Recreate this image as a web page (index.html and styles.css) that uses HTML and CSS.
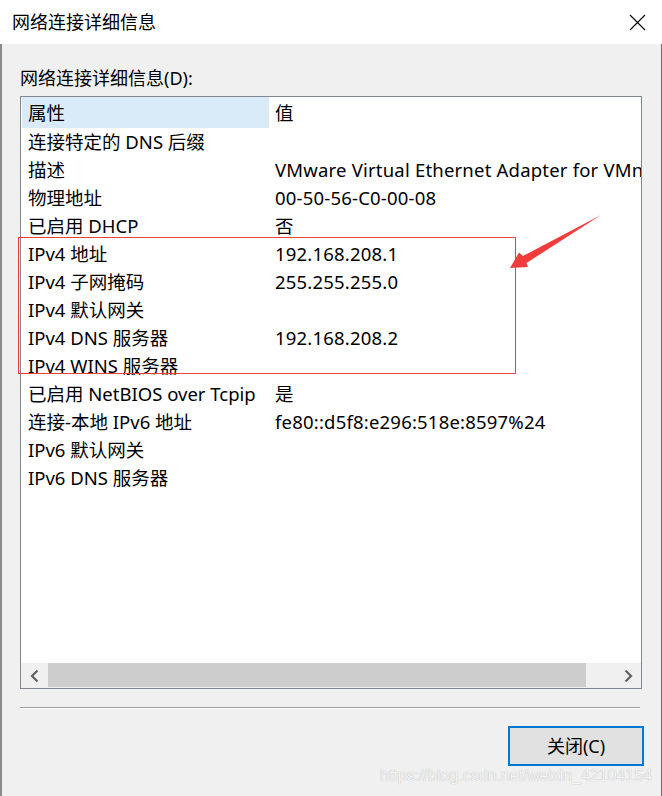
FILE: index.html
```html
<!DOCTYPE html>
<html lang="zh-CN">
<head>
<meta charset="utf-8">
<title>网络连接详细信息</title>
<link rel="stylesheet" href="styles.css">
</head>
<body>
<div class="window">
  <div class="titlebar">
    <span class="title">网络连接详细信息</span>
    <span class="close" aria-label="关闭">
      <svg width="17" height="17" viewBox="0 0 17 17"><path d="M1 1 L16 16 M16 1 L1 16" stroke="#000" stroke-width="1.1" fill="none"/></svg>
    </span>
  </div>
  <div class="content">
    <div class="label">网络连接详细信息(D):</div>
    <div class="listbox">
      <div class="list">
        <div class="row header"><div class="c1">属性</div><div class="c2">值</div></div>
        <div class="row"><div class="c1">连接特定的 DNS 后缀</div><div class="c2"></div></div>
        <div class="row"><div class="c1">描述</div><div class="c2">VMware Virtual Ethernet Adapter for VMnet8</div></div>
        <div class="row"><div class="c1">物理地址</div><div class="c2">00-50-56-C0-00-08</div></div>
        <div class="row"><div class="c1">已启用 DHCP</div><div class="c2">否</div></div>
        <div class="row"><div class="c1">IPv4 地址</div><div class="c2">192.168.208.1</div></div>
        <div class="row"><div class="c1">IPv4 子网掩码</div><div class="c2">255.255.255.0</div></div>
        <div class="row"><div class="c1">IPv4 默认网关</div><div class="c2"></div></div>
        <div class="row"><div class="c1">IPv4 DNS 服务器</div><div class="c2">192.168.208.2</div></div>
        <div class="row"><div class="c1">IPv4 WINS 服务器</div><div class="c2"></div></div>
        <div class="row"><div class="c1">已启用 NetBIOS over Tcpip</div><div class="c2">是</div></div>
        <div class="row"><div class="c1">连接-本地 IPv6 地址</div><div class="c2">fe80::d5f8:e296:518e:8597%24</div></div>
        <div class="row"><div class="c1">IPv6 默认网关</div><div class="c2"></div></div>
        <div class="row"><div class="c1">IPv6 DNS 服务器</div><div class="c2"></div></div>
      </div>
      <div class="hscroll">
        <div class="sbtn">
          <svg width="12" height="14" viewBox="0 0 12 14"><path d="M8.5 1.5 L3 7 L8.5 12.5" stroke="#606060" stroke-width="2.2" fill="none"/></svg>
        </div>
        <div class="track"><div class="thumb"></div></div>
        <div class="sbtn">
          <svg width="12" height="14" viewBox="0 0 12 14"><path d="M3.5 1.5 L9 7 L3.5 12.5" stroke="#606060" stroke-width="2.2" fill="none"/></svg>
        </div>
      </div>
    </div>
    <div class="sep"></div>
    <div class="footer">
      <button class="btn">关闭(C)</button>
    </div>
  </div>
  <svg class="annot" width="662" height="796" viewBox="0 0 662 796">
    <rect x="18.5" y="237.5" width="497" height="136" fill="none" stroke="#e8403f" stroke-width="1"/>
    <polygon points="601,215 523,256 519,252.5 510,268 528,267 526.5,263" fill="#f23c3c"/>
  </svg>
  <div class="watermark">https://blog.csdn.net/weixin_42104154</div>
</div>
</body>
</html>
```

FILE: styles.css
```css
* { box-sizing: border-box; }
html, body {
  margin: 0;
  padding: 0;
}
body {
  width: 662px;
  height: 796px;
  overflow: hidden;
  background: #f0f0f0;
  font-family: "Noto Sans", "Noto Sans CJK SC", sans-serif;
  font-size: 18px;
  color: #000;
}
.window {
  position: relative;
  width: 662px;
  height: 796px;
  display: flex;
  flex-direction: column;
}
.titlebar {
  height: 44px;
  background: #fff;
  display: flex;
  align-items: center;
  justify-content: space-between;
  padding: 0 16px 0 12px;
}
.title {
  font-size: 18px;
  line-height: 24px;
}
.close {
  display: flex;
  width: 17px;
  height: 17px;
}
.content {
  flex: 1;
  background: #f0f0f0;
  box-shadow: inset 2px 0 0 #8a8a8a, inset -1px 0 0 #6e6e6e;
  padding: 22px 20px 0 20px;
  display: flex;
  flex-direction: column;
}
.label {
  line-height: 24px;
  height: 24px;
  margin-bottom: 6px;
}
.listbox {
  width: 622px;
  height: 593px;
  border: 1px solid #828790;
  background: #fff;
  display: flex;
  flex-direction: column;
}
.list {
  flex: 1;
  overflow: hidden;
  padding-left: 1px;
  white-space: nowrap;
  font-size: 18.5px;
}
.row {
  display: flex;
  height: 28px;
  line-height: 28px;
}
.row.header {
  height: 31px;
  line-height: 31px;
}
.c1 {
  width: 247px;
  flex: none;
  padding-left: 6px;
}
.c2 {
  padding-left: 6px;
  flex: none;
  letter-spacing: 0.2px;
}
.header .c1 {
  background: #d9ebf9;
}
.hscroll {
  height: 25px;
  display: flex;
  background: #f0f0f0;
}
.sbtn {
  width: 27px;
  flex: none;
  display: flex;
  align-items: center;
  justify-content: center;
}
.track {
  flex: 1;
  display: flex;
}
.thumb {
  width: 538px;
  height: 24px;
  background: #cdcdcd;
}
.sep {
  margin-top: 18px;
  width: 620px;
  height: 2px;
  border-top: 1px solid #a0a0a0;
  border-bottom: 1px solid #fff;
}
.footer {
  display: flex;
  justify-content: flex-end;
  padding-top: 17px;
  margin-right: -2px;
}
.btn {
  width: 136px;
  height: 40px;
  border: 2px solid #0078d7;
  background: #e1e1e1;
  font-family: "Noto Sans", "Noto Sans CJK SC", sans-serif;
  font-size: 18px;
  color: #000;
  padding: 0;
  line-height: 34px;
}
.annot {
  position: absolute;
  left: 0;
  top: 0;
  pointer-events: none;
}
.watermark {
  position: absolute;
  left: 380px;
  top: 766px;
  font-family: "Liberation Sans", Arial, sans-serif;
  font-size: 16px;
  line-height: 20px;
  color: rgba(255, 255, 255, 0.85);
  text-shadow: 0 0 1px rgba(120, 120, 120, 0.6);
  pointer-events: none;
}
```
